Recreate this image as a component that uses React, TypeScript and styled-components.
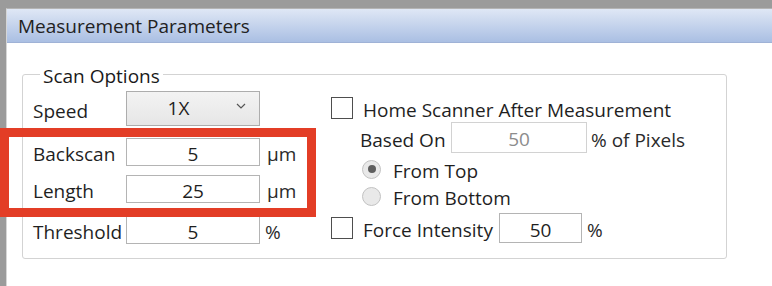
import styled, { createGlobalStyle } from "styled-components";

const GlobalStyle = createGlobalStyle`
  html, body {
    margin: 0;
    padding: 0;
    background: #9b9b9b;
  }
  body {
    font-family: "Open Sans", "Noto Sans", "DejaVu Sans", sans-serif;
    color: #1f1f1f;
  }
`;

const Page = styled.div`
  position: relative;
  width: 772px;
  height: 286px;
  overflow: hidden;
  padding: 8px 0 0 6px;
  box-sizing: border-box;
  background: #9b9b9b;
`;

const Window = styled.div`
  height: 100%;
  background: #ffffff;
  border-left: 1px solid #d6d6d6;
  border-top: 1px solid #b4b4b4;
  box-sizing: border-box;
`;

const TitleBar = styled.div`
  height: 34px;
  display: flex;
  align-items: center;
  padding: 1px 0 0 11px;
  background: linear-gradient(#dfe7f5, #aabfe3);
  border-bottom: 1px solid #9fb2d6;
  font-size: 19px;
  color: #222;
  box-sizing: border-box;
`;

const Body = styled.div`
  padding: 18px 0 0 15px;
`;

const GroupBox = styled.fieldset`
  width: 705px;
  height: 198px;
  box-sizing: border-box;
  margin: 0;
  padding: 0 0 0 10px;
  border: 1px solid #d3d3d3;
  border-radius: 3px;
  min-width: 0;
`;

const Legend = styled.legend`
  margin-left: 7px;
  padding: 4px 3px 0;
  font-size: 19px;
  line-height: 22px;
  color: #1a1a1a;
`;

const Columns = styled.div`
  display: flex;
  padding-top: 4px;
`;

const LeftCol = styled.div`
  width: 298px;
  display: flex;
  flex-direction: column;
`;

const RightCol = styled.div`
  display: flex;
  flex-direction: column;
  padding-top: 6px;
`;

const Row = styled.div<{ $top?: number; $h: number; $indent?: number }>`
  display: flex;
  align-items: center;
  height: ${(p) => p.$h}px;
  margin-top: ${(p) => p.$top ?? 0}px;
  padding-left: ${(p) => p.$indent ?? 0}px;
  font-size: 19px;
  white-space: nowrap;
`;

// text sits a little below the middle of each row, as in the original dialog
const Label = styled.span<{ $w: number }>`
  width: ${(p) => p.$w}px;
  flex: none;
  padding-top: 4px;
`;

const TextBox = styled.div<{ $w: number; $disabled?: boolean }>`
  width: ${(p) => p.$w}px;
  height: 100%;
  box-sizing: border-box;
  flex: none;
  display: flex;
  align-items: center;
  justify-content: center;
  padding-top: 3px;
  background: #fff;
  border: 1px solid ${(p) => (p.$disabled ? "#d2d2d2" : "#b4b4b4")};
  color: ${(p) => (p.$disabled ? "#8c8c8c" : "#1f1f1f")};
`;

const Unit = styled.span<{ $gap: number }>`
  margin-left: ${(p) => p.$gap}px;
  padding-top: 4px;
  color: #2a2a2a;
`;

const Combo = styled.div`
  width: 134px;
  height: 100%;
  box-sizing: border-box;
  display: flex;
  align-items: center;
  border: 1px solid #adadad;
  background: linear-gradient(#f3f3f3, #e6e6e6);
`;

const ComboText = styled.span`
  flex: 1;
  text-align: center;
  padding: 0 0 2px 2px;
`;

const Chevron = styled.svg`
  width: 10px;
  height: 6px;
  margin: 0 13px 6px 8px;
`;

const CheckBox = styled.span`
  width: 22px;
  height: 22px;
  box-sizing: border-box;
  flex: none;
  border: 1px solid #4e4e4e;
  background: #fff;
`;

const CheckLabel = styled.span<{ $w?: number }>`
  margin-left: 10px;
  padding-top: 3px;
  width: ${(p) => (p.$w ? `${p.$w}px` : "auto")};
  flex: none;
`;

const Radio = styled.span<{ $checked?: boolean }>`
  width: 19px;
  height: 19px;
  box-sizing: border-box;
  flex: none;
  border-radius: 50%;
  border: 1px solid #c2c2c2;
  background: #e9e9e9;
  display: flex;
  align-items: center;
  justify-content: center;

  &::after {
    content: "";
    display: ${(p) => (p.$checked ? "block" : "none")};
    width: 8px;
    height: 8px;
    border-radius: 50%;
    background: #5e5e5e;
  }
`;

const RadioLabel = styled.span`
  margin-left: 12px;
  padding-top: 3px;
`;

const Highlight = styled.div`
  position: absolute;
  left: 0;
  top: 128px;
  width: 316px;
  height: 89px;
  box-sizing: border-box;
  border: 9px solid #e33d26;
  pointer-events: none;
`;

export default function App() {
  return (
    <>
      <GlobalStyle />
      <Page>
        <Window>
          <TitleBar>Measurement Parameters</TitleBar>
          <Body>
            <GroupBox>
              <Legend>Scan Options</Legend>
              <Columns>
                <LeftCol>
                  <Row $h={35}>
                    <Label $w={93}>Speed</Label>
                    <Combo>
                      <ComboText>1X</ComboText>
                      <Chevron viewBox="0 0 10 6">
                        <path d="M1 1 L5 5 L9 1" fill="none" stroke="#555" strokeWidth="1.2" />
                      </Chevron>
                    </Combo>
                  </Row>
                  <Row $top={12} $h={28}>
                    <Label $w={93}>Backscan</Label>
                    <TextBox $w={134}>5</TextBox>
                    <Unit $gap={7}>µm</Unit>
                  </Row>
                  <Row $top={9} $h={28}>
                    <Label $w={93}>Length</Label>
                    <TextBox $w={134}>25</TextBox>
                    <Unit $gap={7}>µm</Unit>
                  </Row>
                  <Row $top={13} $h={28}>
                    <Label $w={93}>Threshold</Label>
                    <TextBox $w={134}>5</TextBox>
                    <Unit $gap={5}>%</Unit>
                  </Row>
                </LeftCol>
                <RightCol>
                  <Row $h={22}>
                    <CheckBox />
                    <CheckLabel>Home Scanner After Measurement</CheckLabel>
                  </Row>
                  <Row $top={3} $h={31} $indent={29}>
                    <Label $w={91}>Based On</Label>
                    <TextBox $w={136} $disabled>50</TextBox>
                    <Unit $gap={4}>% of Pixels</Unit>
                  </Row>
                  <Row $top={5} $h={22} $indent={31}>
                    <Radio $checked />
                    <RadioLabel>From Top</RadioLabel>
                  </Row>
                  <Row $top={5} $h={22} $indent={31}>
                    <Radio />
                    <RadioLabel>From Bottom</RadioLabel>
                  </Row>
                  <Row $top={6} $h={30}>
                    <CheckBox />
                    <CheckLabel $w={136}>Force Intensity</CheckLabel>
                    <TextBox $w={83}>50</TextBox>
                    <Unit $gap={5}>%</Unit>
                  </Row>
                </RightCol>
              </Columns>
            </GroupBox>
          </Body>
        </Window>
        <Highlight />
      </Page>
    </>
  );
}
